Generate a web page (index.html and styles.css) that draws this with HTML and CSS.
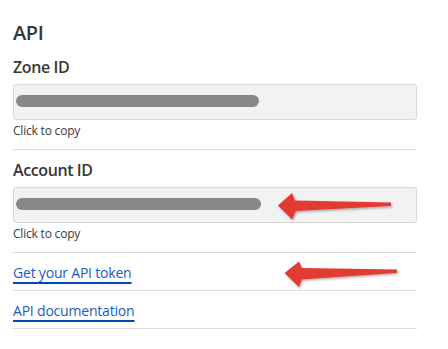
FILE: index.html
```html
<!DOCTYPE html>
<html lang="en">
<head>
    <meta charset="UTF-8">
    <meta name="viewport" content="width=device-width, initial-scale=1.0">
    <title>API</title>
    <link rel="stylesheet" href="styles.css">
</head>
<body>
<div class="panel">
    <h2 class="panel-title">API</h2>

    <div class="field">
        <div class="field-label">Zone ID</div>
        <div class="copy-box"><span class="mask" style="width: 243px"></span></div>
        <div class="copy-hint">Click to copy</div>
    </div>

    <div class="field">
        <div class="field-label">Account ID</div>
        <div class="copy-box"><span class="mask" style="width: 245px"></span></div>
        <div class="copy-hint">Click to copy</div>
    </div>

    <div class="link-row"><a href="#">Get your API token</a></div>
    <div class="link-row"><a href="#">API documentation</a></div>

    <!-- annotation arrows drawn over the screenshot -->
    <svg class="arrows" width="448" height="349" viewBox="0 0 448 349">
        <defs>
            <filter id="shade" x="-10%" y="-30%" width="120%" height="160%">
                <feDropShadow dx="1" dy="1.5" stdDeviation="1" flood-color="#000" flood-opacity="0.3"/>
            </filter>
        </defs>
        <polygon filter="url(#shade)" fill="#e23b31"
                 points="278,205.5 292,193 295,200.5 391,202.5 391,206 296,211 292,219.5"/>
        <polygon filter="url(#shade)" fill="#e23b31"
                 points="284.5,273 299,261.5 302,268 397,269.5 397,273 302,279.5 299,287"/>
    </svg>
</div>
</body>
</html>
```

FILE: styles.css
```css
body{
    margin: 0;
    padding: 0;
    background-color: #fff;
    font-family: "Open Sans", "Noto Sans", sans-serif;
    color: #313131;
}
.panel{
    position: relative;
    width: 404px;
    padding: 21px 0 0 13px;
}
.panel-title{
    margin: 0;
    font-size: 20px;
    line-height: 24px;
    font-weight: 600;
    letter-spacing: -0.4px;
    color: #363636;
}
.field{
    padding: 10px 0 10px;
    border-bottom: 1px solid #dcdcdc;
}
.field:first-of-type{
    padding-top: 12px;
}
.field-label{
    font-size: 16px;
    line-height: 20px;
    font-weight: 600;
    letter-spacing: -0.4px;
    margin-bottom: 7px;
    color: #363636;
}
.copy-box{
    height: 14px;
    padding: 10px 2px;
    background-color: #f2f2f2;
    border: 1px solid #d9d9d9;
    border-radius: 3px;
}
.mask{
    display: block;
    height: 12px;
    border-radius: 6px;
    background-color: #888;
}
.copy-hint{
    margin-top: 3px;
    font-size: 12px;
    line-height: 16px;
    color: #3a3a3a;
    letter-spacing: -0.2px;
}
.link-row{
    padding: 10px 0 7px;
    line-height: 20px;
    font-size: 14px;
    border-bottom: 1px solid #dcdcdc;
}
.link-row a{
    color: #1c5bc5;
    text-decoration: underline;
    text-decoration-color: #0049b0;
    text-decoration-thickness: 1.5px;
    text-underline-offset: 4px;
    letter-spacing: -0.2px;
}
.arrows{
    position: absolute;
    left: 0;
    top: 0;
    pointer-events: none;
}
```
